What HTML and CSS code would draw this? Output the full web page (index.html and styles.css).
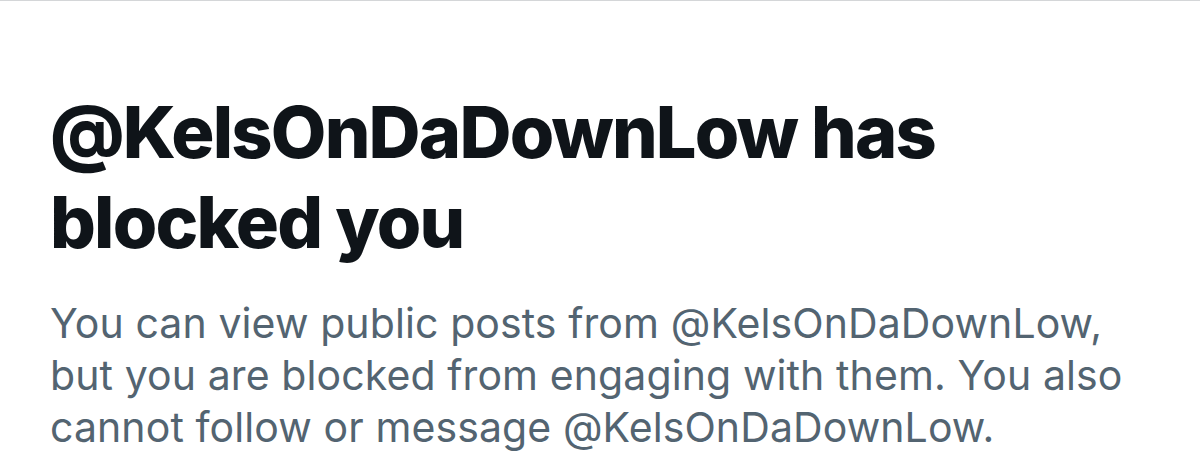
FILE: index.html
```html
<!DOCTYPE html>
<html lang="en">
<head>
<meta charset="utf-8">
<title>Blocked</title>
<link rel="stylesheet" href="styles.css">
</head>
<body>
<main class="blocked">
  <h1 class="blocked-title">@KelsOnDaDownLow has blocked you</h1>
  <p class="blocked-text">You can view public posts from @KelsOnDaDownLow, but you are blocked from engaging with them. You also cannot follow or message @KelsOnDaDownLow.</p>
</main>
</body>
</html>
```
FILE: styles.css
```css
html, body {
  margin: 0;
  padding: 0;
  background: #ffffff;
}
body {
  border-top: 1px solid #d4d6d8;
  height: 474px;
  overflow: hidden;
  font-family: Inter, "Noto Sans", sans-serif;
}
.blocked {
  padding: 86px 40px 0 50px;
}
.blocked-title {
  margin: 0;
  font-size: 72px;
  line-height: 90px;
  font-weight: 800;
  color: #0f1419;
  letter-spacing: -1.8px;
  max-width: 960px;
}
.blocked-text {
  margin: 30px 0 0 0;
  font-size: 41px;
  line-height: 52px;
  font-weight: 400;
  color: #536471;
  letter-spacing: 0.1px;
  max-width: 1100px;
}
```
